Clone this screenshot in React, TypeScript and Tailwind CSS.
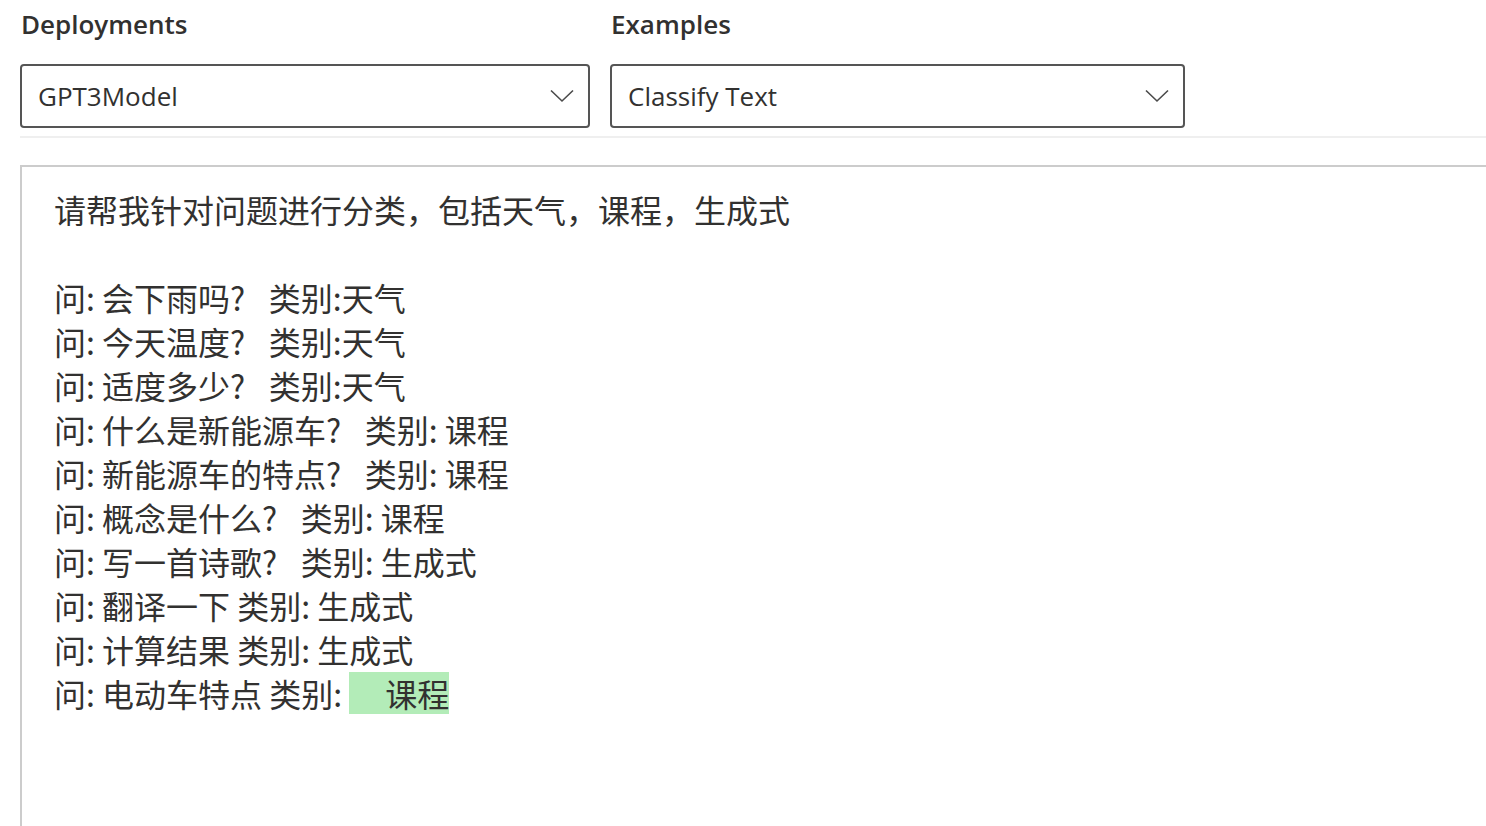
import React from "react";

const GAP = "   \u200A";

const LINES = [
  "请帮我针对问题进行分类，包括天气，课程，生成式",
  "",
  `问: 会下雨吗?${GAP}类别:天气`,
  `问: 今天温度?${GAP}类别:天气`,
  `问: 适度多少?${GAP}类别:天气`,
  `问: 什么是新能源车?${GAP}类别: 课程`,
  `问: 新能源车的特点?${GAP}类别: 课程`,
  `问: 概念是什么?${GAP}类别: 课程`,
  `问: 写一首诗歌?${GAP}类别: 生成式`,
  "问: 翻译一下 类别: 生成式",
  "问: 计算结果 类别: 生成式",
];

function Chevron() {
  return (
    <svg width="24" height="14" viewBox="0 0 24 14" fill="none" className="shrink-0">
      <path d="M1 1.5 L12 12 L23 1.5" stroke="#4a4a4a" strokeWidth="1.6" />
    </svg>
  );
}

function Dropdown({ label, value, width }: { label: string; value: string; width: string }) {
  return (
    <div className={`flex flex-col ${width}`}>
      <div className="h-[48px] leading-[48px] text-[26px] font-semibold text-[#323130] pl-px">{label}</div>
      <div className="mt-[16px] h-[64px] border-2 border-[#555555] rounded-[4px] flex items-center justify-between pl-[16px] pr-[14px]">
        <span className="text-[26px] text-[#323130]">{value}</span>
        <Chevron />
      </div>
    </div>
  );
}

export default function App() {
  return (
    <div
      className="w-[1486px] h-[826px] overflow-hidden bg-white pl-[20px]"
      style={{ fontFamily: '"Open Sans", "Noto Sans CJK SC", sans-serif' }}
    >
      <div className="flex gap-[20px]">
        <Dropdown label="Deployments" value="GPT3Model" width="w-[570px]" />
        <Dropdown label="Examples" value="Classify Text" width="w-[575px]" />
      </div>

      {/* divider */}
      <div className="mt-[8px] h-[2px] bg-[#efefef]" />

      {/* prompt area */}
      <div
        className="mt-[27px] h-[700px] border-t-2 border-l-2 border-[#cccccc] pl-[32px] pt-[20px] text-[32px] leading-[44px] text-[#323130] whitespace-pre"
        style={{ fontFamily: '"Noto Sans CJK SC", sans-serif' }}
      >
        {LINES.map((l, i) => (
          <div key={i} className="h-[44px]">{l}</div>
        ))}
        <div className="h-[44px]">
          问: 电动车特点 类别: <span className="inline-block h-[42px] leading-[42px] align-top mt-px bg-[#b3ecb8]">{"     课程"}</span>
        </div>
      </div>
    </div>
  );
}
